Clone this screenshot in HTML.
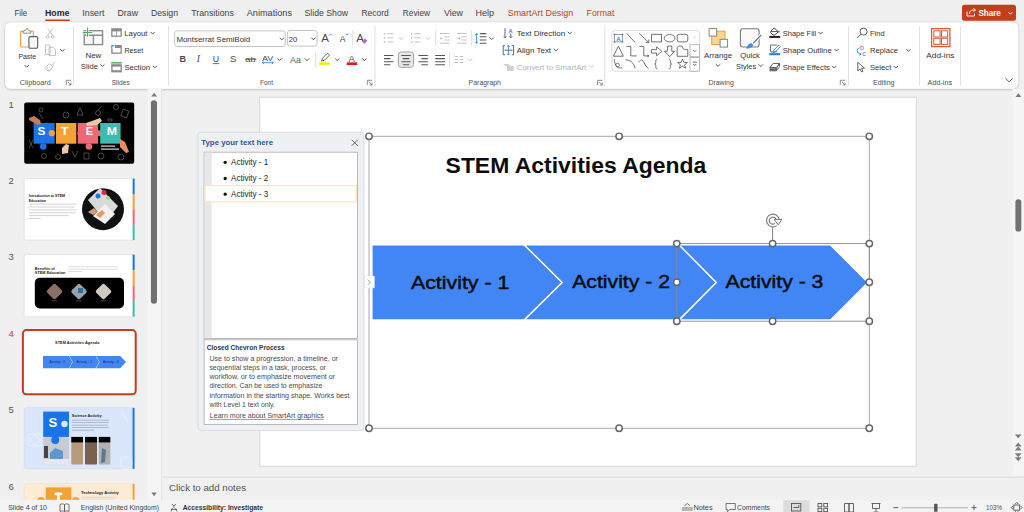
<!DOCTYPE html>
<html><head><meta charset="utf-8">
<style>
html,body{margin:0;padding:0;width:1024px;height:512px;overflow:hidden;background:#f0f0f0;}
svg{display:block;position:absolute;left:0;top:0;}
text{font-family:"Liberation Sans",sans-serif;}
</style></head>
<body>
<svg width="1024" height="512" viewBox="0 0 1024 512">
<defs>
<filter id="sh" x="-5%" y="-20%" width="110%" height="150%"><feDropShadow dx="0" dy="0.6" stdDeviation="0.8" flood-color="#000" flood-opacity="0.28"/></filter>
</defs>
<!-- background -->
<rect x="0" y="0" width="1024" height="512" fill="#f0f0f0"/>
<!-- TABS -->
<g font-size="9" fill="#424242">
<text x="14.5" y="16.4" textLength="12.8" lengthAdjust="spacingAndGlyphs">File</text>
<text x="45" y="16.4" textLength="24.5" lengthAdjust="spacingAndGlyphs" font-weight="700" fill="#262626">Home</text>
<text x="82.3" y="16.4" textLength="22.1" lengthAdjust="spacingAndGlyphs">Insert</text>
<text x="117.5" y="16.4" textLength="20.5" lengthAdjust="spacingAndGlyphs">Draw</text>
<text x="151" y="16.4" textLength="27" lengthAdjust="spacingAndGlyphs">Design</text>
<text x="191.25" y="16.4" textLength="42.6" lengthAdjust="spacingAndGlyphs">Transitions</text>
<text x="246.7" y="16.4" textLength="45.3" lengthAdjust="spacingAndGlyphs">Animations</text>
<text x="304.5" y="16.4" textLength="43.5" lengthAdjust="spacingAndGlyphs">Slide Show</text>
<text x="361.4" y="16.4" textLength="27.35" lengthAdjust="spacingAndGlyphs">Record</text>
<text x="402.8" y="16.4" textLength="27.2" lengthAdjust="spacingAndGlyphs">Review</text>
<text x="444" y="16.4" textLength="19" lengthAdjust="spacingAndGlyphs">View</text>
<text x="475.5" y="16.4" textLength="18.5" lengthAdjust="spacingAndGlyphs">Help</text>
<text x="507.7" y="16.4" textLength="65.6" lengthAdjust="spacingAndGlyphs" fill="#c43e1c">SmartArt Design</text>
<text x="586.6" y="16.4" textLength="27.8" lengthAdjust="spacingAndGlyphs" fill="#c43e1c">Format</text>
</g>
<rect x="45" y="19.5" width="25" height="1.6" rx="0.8" fill="#c43e1c"/>
<!-- Share -->
<rect x="962" y="4.7" width="54" height="16" rx="2.5" fill="#c43e1c"/>
<text x="978.4" y="16.1" font-size="9" font-weight="700" fill="#fff" textLength="22.4" lengthAdjust="spacingAndGlyphs">Share</text>
<g fill="none" stroke="#fff" stroke-width="0.9"><path d="M967 11.5v4.5h7.5v-2.5"/><path d="M969.5 14c0-3 1.5-4 4-4h1.5M973.5 8.5l2 1.5-2 1.5"/></g>
<polyline points="1008.3,12.2 1010.3,14.2 1012.3,12.2" fill="none" stroke="#fff" stroke-width="0.9"/>
<!-- RIBBON -->
<rect x="5" y="22.6" width="1013.2" height="66.2" rx="6" fill="#fff" filter="url(#sh)"/>

<!-- font boxes -->
<rect x="174.6" y="30.9" width="110.6" height="15.6" rx="2.5" fill="#fff" stroke="#bdbdbd" stroke-width="0.9"/>
<rect x="287.4" y="30.5" width="29.6" height="15.6" rx="2.5" fill="#fff" stroke="#bdbdbd" stroke-width="0.9"/>
<!-- separators -->
<g stroke="#e1e1e1" stroke-width="1">
<line x1="73.5" y1="26" x2="73.5" y2="86"/>
<line x1="168.5" y1="26" x2="168.5" y2="86"/>
<line x1="375" y1="26" x2="375" y2="86"/>
<line x1="604.8" y1="26" x2="604.8" y2="86"/>
<line x1="848.5" y1="26" x2="848.5" y2="86"/>
<line x1="919.5" y1="26" x2="919.5" y2="86"/>
<line x1="960.5" y1="26" x2="960.5" y2="86"/>
<line x1="352.7" y1="30" x2="352.7" y2="46"/>
<line x1="315.6" y1="52" x2="315.6" y2="67"/>
<line x1="435.6" y1="30" x2="435.6" y2="46"/>
<line x1="471.4" y1="30" x2="471.4" y2="46"/>
<line x1="449.5" y1="52" x2="449.5" y2="67"/>
</g>
<!-- ribbon texts -->
<g font-size="8" fill="#333">
<text x="18.4" y="59.3" textLength="17.7" lengthAdjust="spacingAndGlyphs">Paste</text>
<text x="85.4" y="58.4" textLength="16" lengthAdjust="spacingAndGlyphs">New</text>
<text x="80.8" y="69.3" textLength="17.2" lengthAdjust="spacingAndGlyphs">Slide</text>
<text x="124.3" y="36" textLength="23.2" lengthAdjust="spacingAndGlyphs">Layout</text>
<text x="124.4" y="52.8" textLength="18.8" lengthAdjust="spacingAndGlyphs">Reset</text>
<text x="124.4" y="69.9" textLength="25.6" lengthAdjust="spacingAndGlyphs">Section</text>
<text x="176.4" y="41.7" textLength="73.8" lengthAdjust="spacingAndGlyphs">Montserrat SemiBold</text>
<text x="288.7" y="41.7" textLength="8.6" lengthAdjust="spacingAndGlyphs">20</text>
<text x="516.7" y="36.3" textLength="48.6" lengthAdjust="spacingAndGlyphs">Text Direction</text>
<text x="516.7" y="53" textLength="34.4" lengthAdjust="spacingAndGlyphs">Align Text</text>
<text x="516.7" y="70.2" textLength="69.6" lengthAdjust="spacingAndGlyphs" fill="#b4b4b4">Convert to SmartArt</text>
<text x="704.1" y="58.2" textLength="27.9" lengthAdjust="spacingAndGlyphs">Arrange</text>
<text x="740.2" y="57.8" textLength="19.8" lengthAdjust="spacingAndGlyphs">Quick</text>
<text x="736.1" y="68.5" textLength="20" lengthAdjust="spacingAndGlyphs">Styles</text>
<text x="782.7" y="36.2" textLength="33.5" lengthAdjust="spacingAndGlyphs">Shape Fill</text>
<text x="782.7" y="53" textLength="49" lengthAdjust="spacingAndGlyphs">Shape Outline</text>
<text x="782.7" y="70.2" textLength="47.1" lengthAdjust="spacingAndGlyphs">Shape Effects</text>
<text x="870" y="36.2" textLength="14.6" lengthAdjust="spacingAndGlyphs">Find</text>
<text x="870" y="53" textLength="28" lengthAdjust="spacingAndGlyphs">Replace</text>
<text x="870" y="70.2" textLength="21.3" lengthAdjust="spacingAndGlyphs">Select</text>
<text x="926.3" y="58.1" textLength="28.1" lengthAdjust="spacingAndGlyphs">Add-ins</text>
</g>
<g font-size="7" fill="#505050">
<text x="19.8" y="85" textLength="30.9" lengthAdjust="spacingAndGlyphs">Clipboard</text>
<text x="111.7" y="85" textLength="18.1" lengthAdjust="spacingAndGlyphs">Slides</text>
<text x="260" y="85" textLength="13" lengthAdjust="spacingAndGlyphs">Font</text>
<text x="468.6" y="84.6" textLength="32.4" lengthAdjust="spacingAndGlyphs">Paragraph</text>
<text x="708.4" y="84.6" textLength="25.4" lengthAdjust="spacingAndGlyphs">Drawing</text>
<text x="873" y="84.6" textLength="21.5" lengthAdjust="spacingAndGlyphs">Editing</text>
<text x="927.6" y="84.8" textLength="24.4" lengthAdjust="spacingAndGlyphs">Add-ins</text>
</g>
<!-- chevrons -->
<g fill="none" stroke="#4a4a4a" stroke-width="0.95">
<polyline points="24.6,65.15 26.7,67.25 28.8,65.15"/>
<polyline points="60.3,49.15 62.4,51.25 64.5,49.15"/>
<polyline points="100.3,64.35 102.4,66.45 104.5,64.35"/>
<polyline points="150.6,31.95 152.7,34.05 154.8,31.95"/>
<polyline points="152.9,65.75 155.0,67.85 157.1,65.75"/>
<polyline points="279.8,37.65 281.9,39.75 284.0,37.65"/>
<polyline points="311.3,37.65 313.4,39.75 315.5,37.65"/>
<polyline points="277.5,58.45 279.6,60.55 281.7,58.45"/>
<polyline points="304.9,58.45 307.0,60.55 309.1,58.45"/>
<polyline points="335.1,58.45 337.2,60.55 339.3,58.45"/>
<polyline points="362.3,58.45 364.4,60.55 366.5,58.45"/>
<polyline points="489.7,37.45 491.8,39.55 493.9,37.45"/>
<polyline points="567.7,31.75 569.8,33.85 571.9,31.75"/>
<polyline points="553.9,48.75 556.0,50.85 558.1,48.75"/>
<polyline points="715.9,64.25 718.0,66.35 720.1,64.25"/>
<polyline points="758.8,64.45 760.9,66.55 763.0,64.45"/>
<polyline points="818.6,31.95 820.7,34.05 822.8,31.95"/>
<polyline points="834.4,48.95 836.5,51.05 838.6,48.95"/>
<polyline points="832.2,65.95 834.3,68.05 836.4,65.95"/>
<polyline points="906.2,49.35 908.3,51.45 910.4,49.35"/>
<polyline points="893.7,65.95 895.8,68.05 897.9,65.95"/>
<polyline points="1005.6,78.4 1009.1,81.9 1012.6,78.4" stroke-width="0.9"/>
</g>
<g fill="none" stroke="#bdbdbd" stroke-width="0.95">
<polyline points="399.0,37.45 401.1,39.55 403.2,37.45"/>
<polyline points="426.1,37.45 428.2,39.55 430.3,37.45"/>
<polyline points="468.0,58.65 470.1,60.75 472.2,58.65"/>
<polyline points="589.4,65.45 591.5,67.55 593.6,65.45"/>
</g>
<!-- dialog launchers -->
<g fill="none" stroke="#606060" stroke-width="0.7">
<path d="M66.3 85V80.3H71M67.8 81.8l3.2 3.2M71 82.6V85h-2.4"/>
<path d="M367.3 85V80.3H372M368.8 81.8l3.2 3.2M372 82.6V85h-2.4"/>
<path d="M597.6 85V80.3H602.3M599.1 81.8l3.2 3.2M602.3 82.6V85h-2.4"/>
<path d="M840.3 85V80.3H845M841.8 81.8l3.2 3.2M845 82.6V85h-2.4"/>
</g>

<!-- Paste -->
<rect x="20.6" y="31.4" width="12.8" height="15.6" rx="0.8" fill="#fff" stroke="#eea43c" stroke-width="1.2"/>
<path d="M23.2 33.2V31.2l2.6-1.2 1.2-1.8 1.2 1.8 2.6 1.2v2z" fill="#f3f3f3" stroke="#7a7a7a" stroke-width="0.8"/>
<rect x="28.9" y="36.6" width="8.8" height="11.6" rx="1.3" fill="#f6f6f6" stroke="#5a5a5a" stroke-width="1.1"/>
<!-- scissors -->
<g fill="none" stroke="#b5b5b5" stroke-width="0.8">
<path d="M47.6 28.5l5 7M52.8 28.5l-5 7"/><circle cx="47.6" cy="37" r="1.4"/><circle cx="52.8" cy="37" r="1.4"/>
<!-- copy -->
<path d="M45.5 45h4.5v9.5h-4.5z"/><path d="M49 47.3h4.3l2.2 2.2v6h-6.5z"/>
<!-- format painter -->
<path d="M45.3 67.3l4.3-3.6 3.2 3.2-3.6 4.3c-1.6-.3-3.5-2.2-3.9-3.9z M49.8 68.6l-2.2 2.2M48.3 67.2l-2.1 2M50.8 65.7l1.6-1.6 1.4 1.4-1.6 1.6M53.2 63.8l2-2"/>
</g>
<!-- New slide -->
<g fill="none" stroke="#8c8c8c" stroke-width="1.4">
<rect x="84.2" y="30.7" width="18.4" height="13.9" fill="#fafafa"/>
<path d="M84.2 35.3h18.4M93.4 35.3v9.3"/>
</g>
<path d="M82.6 32.3h9.6M87.5 27.4v9.3" stroke="#fff" stroke-width="2.6"/>
<path d="M82.6 32.3h9.6M87.5 27.4v9.3" stroke="#4db05a" stroke-width="1.2"/>
<!-- Layout -->
<rect x="111.2" y="28.2" width="10.6" height="8.6" fill="#8a8a8a"/>
<rect x="112.5" y="31.4" width="3.7" height="4.1" fill="#fff"/><rect x="116.9" y="31.4" width="3.6" height="4.1" fill="#fff"/>
<!-- Reset -->
<rect x="111.2" y="45" width="10.6" height="8.8" fill="#8a8a8a"/>
<rect x="112.6" y="48" width="7.9" height="4.5" fill="#fff"/>
<rect x="110.5" y="44" width="4.5" height="4.5" fill="#fff"/>
<path d="M111.8 48.5v-2.8h2.6" fill="none" stroke="#2e89e4" stroke-width="1"/><path d="M110.8 46.5l1-1.6 1 1.6" fill="#2e89e4"/>
<!-- Section -->
<rect x="111.2" y="62" width="10.6" height="1.6" fill="#5cb65f"/>
<rect x="111.2" y="64.2" width="10.6" height="8.2" fill="#8a8a8a"/>
<rect x="112.6" y="66.6" width="7.9" height="3.6" fill="#fff"/>
<!-- grow / shrink / clear -->
<g fill="#4a4a4a">
<text x="321.3" y="41.9" font-size="11.5">A</text>
<text x="339.8" y="41.9" font-size="8.8">A</text>
<text x="356.3" y="42" font-size="11.5">A</text>
</g>
<polyline points="329,35.4 330.5,33.9 332,35.4" fill="none" stroke="#2e89e4" stroke-width="0.9"/>
<polyline points="345.8,33.5 347.3,35 348.8,33.5" fill="none" stroke="#2e89e4" stroke-width="0.9"/>
<path d="M362 41.5l3-3 2.3 2.3-3 3z" fill="#b662c9"/>
<g fill="#4a4a4a">
<text x="179.6" y="62.2" font-size="9" font-weight="700">B</text>
<text x="196.8" y="62.2" font-size="9.5" font-style="italic" style="font-family:'Liberation Serif',serif">I</text>
<text x="212.8" y="61.8" font-size="8.8">U</text>
<text x="230" y="62.2" font-size="9.5">S</text>
<text x="245.3" y="62" font-size="7.5" textLength="10.5" lengthAdjust="spacingAndGlyphs">ab</text>
<text x="262" y="60.8" font-size="8" textLength="11.3" lengthAdjust="spacingAndGlyphs">AV</text>
<text x="290" y="62.8" font-size="9.2" textLength="11" lengthAdjust="spacingAndGlyphs" fill="#5a5a5a">Aa</text>
<text x="348.6" y="61.8" font-size="9.5" fill="#505050">A</text>
</g>
<path d="M212.8 63.6h6.4" stroke="#4a4a4a" stroke-width="0.8"/>
<path d="M244.8 59.2h11.5" stroke="#4a4a4a" stroke-width="0.8"/>
<path d="M262.3 62.7h11M262.3 62.7l1.5-1.2M262.3 62.7l1.5 1.2M273.3 62.7l-1.5-1.2M273.3 62.7l-1.5 1.2" stroke="#2e89e4" stroke-width="0.9" fill="none"/>
<path d="M321.5 61l1-2.8 5-5 2 2-5 5z" fill="none" stroke="#555" stroke-width="0.9"/>
<rect x="319.2" y="62.3" width="10.8" height="2.5" fill="#f6ea00"/>
<rect x="346.8" y="62.4" width="10.4" height="2.6" fill="#ee1010"/>
<!-- bullets & numbering (disabled) -->
<g fill="#c2c2c2"><circle cx="384.5" cy="33.7" r="0.9"/><circle cx="384.5" cy="37.8" r="0.9"/><circle cx="384.5" cy="42" r="0.9"/>
<rect x="411" y="32.9" width="1.3" height="1.8"/><rect x="411" y="37" width="1.3" height="1.8"/><rect x="411" y="41.2" width="1.3" height="1.8"/></g>
<g stroke="#c2c2c2" stroke-width="1" fill="none">
<path d="M387.6 33.7h5.8M387.6 37.8h5.8M387.6 42h5.8"/>
<path d="M414.4 33.7h6.1M414.4 37.8h6.1M414.4 42h6.1"/>
<path d="M439.8 33.5h9.7M444.3 36.8h5.2M444.3 40h5.2M439.8 43.2h9.7M440 38.4h3M440 38.4l1.3-1.1M440 38.4l1.3 1.1"/>
<path d="M457 33.5h9.7M461.5 36.8h5.2M461.5 40h5.2M457 43.2h9.7M457.3 38.4h3M460.3 38.4l-1.3-1.1M460.3 38.4l-1.3 1.1"/>
<path d="M454.5 56.5h3.5M454.5 59.5h3.5M454.5 62.5h3.5M459.8 56.5h3.5M459.8 59.5h3.5M459.8 62.5h3.5"/>
</g>
<!-- line spacing -->
<g stroke="#555" stroke-width="1.1" fill="none"><path d="M479.8 33.6h6.5M479.8 36.8h6.5M479.8 40h6.5M479.8 43.2h6.5"/></g>
<g stroke="#2e89e4" stroke-width="0.9" fill="none"><path d="M476.6 33.5v9.8M475.2 35l1.4-1.5 1.4 1.5M475.2 41.8l1.4 1.5 1.4-1.5"/></g>
<!-- alignment -->
<rect x="398.4" y="51.9" width="15.1" height="15.5" rx="3" fill="#e8e8e8" stroke="#8f8f8f" stroke-width="0.8"/>
<g stroke="#555" stroke-width="1.05" fill="none">
<path d="M384 55.4h9.4M384 58.6h6.4M384 61.7h9.4M384 64.8h6.4"/>
<path d="M401.3 55.4h9.4M402.8 58.6h6.4M401.3 61.7h9.4M402.8 64.8h6.4"/>
<path d="M418.4 55.4h9.4M421.4 58.6h6.4M418.4 61.7h9.4M421.4 64.8h6.4"/>
<path d="M435.2 55.4h9.8M435.2 58.6h9.8M435.2 61.7h9.8M435.2 64.8h9.8"/>
</g>
<!-- text direction -->
<g stroke="#555" stroke-width="0.9" fill="none"><path d="M505 28.2v9.5M503.7 36.3l1.3 1.5 1.3-1.5M510.8 33.5v4.2M509.5 36.3l1.3 1.5 1.3-1.5"/></g>
<text x="508.6" y="32.6" font-size="5.6" font-weight="700" fill="#2e89e4">A</text>
<!-- align text -->
<g stroke="#555" stroke-width="0.9" fill="none"><path d="M505 45.6h-1.8v9.2h1.8M511.8 45.6h1.8v9.2h-1.8M504.5 50.2h8"/></g>
<g stroke="#2e89e4" stroke-width="0.9" fill="none"><path d="M508.4 45.4v9.6M507.1 46.8l1.3-1.4 1.3 1.4M507.1 53.6l1.3 1.4 1.3-1.4"/></g>
<!-- convert -->
<g fill="#d0d0d0"><path d="M503.2 64h5.5l2 2h-5.5z"/><rect x="507" y="66" width="6.6" height="5" /></g>

<!-- shapes gallery -->
<rect x="611.9" y="30.6" width="87.7" height="40.6" rx="3" fill="#fff" stroke="#d6d6d6" stroke-width="0.9"/>
<rect x="690" y="44.7" width="9.6" height="12" fill="#fff" stroke="#a8a8a8" stroke-width="0.8"/>
<rect x="690" y="57.6" width="9.6" height="13.6" fill="#fff" stroke="#a8a8a8" stroke-width="0.8"/>
<polyline points="693.6,37.9 694.9,36.6 696.2,37.9" fill="none" stroke="#c8c8c8" stroke-width="0.8"/>
<polyline points="693.3,50.2 694.8,51.7 696.3,50.2" fill="none" stroke="#404040" stroke-width="0.8"/>
<path d="M692.8 62.2h4M693.3 64l1.5 1.5 1.5-1.5" fill="none" stroke="#404040" stroke-width="0.8"/>
<g fill="none" stroke="#5a5a5a" stroke-width="0.85">
<rect x="614.4" y="34.4" width="8.1" height="7.4" stroke="#8a8a8a"/>
<path d="M626.6 33.3l8.5 9.1"/>
<path d="M639.2 33.3l9.6 9.3M648.8 42.6v-3M648.8 42.6h-3"/>
<rect x="651.6" y="34.3" width="10" height="7.6"/>
<ellipse cx="669.6" cy="38.2" rx="5.4" ry="3.7"/>
<rect x="677.2" y="34.3" width="10.6" height="7.6" rx="2"/>
<path d="M613.4 56.2l5-10 5 10z"/>
<path d="M626.4 46.4h4.4v9.5h6"/>
<path d="M639.4 46.4h4.4v9.5h4.6"/><path d="M647.6 55l1.3.9-1.3.9" fill="#5a5a5a"/>
<path d="M651.4 49.6h5.2v-2.8l5.3 4.5-5.3 4.5v-2.8h-5.2z"/>
<path d="M667.4 46.1h4.4v5.2h2.8l-5 5.3-5-5.3h2.8z"/>
<path d="M679 46.1h3.2c0 2.2 1.6 3.6 3.8 3.6h1.8v6.6h-10.6v-8.4c0-1 .8-1.8 1.8-1.8z"/>
<path d="M614.2 59c.4 3.5 1.2 7.2 3.2 7.6 1.8.4 2.6-1.6 1.4-2.9-1.2-1.3-3.4-.3-3 1.6.4 2 3.6 3.4 6.6 2.4"/>
<path d="M625.6 59.8c4 0 8.5 3 9.5 8.6"/>
<path d="M638.4 62.3c1.5-2 3-3 4.5-1.5 2 2 2.5 6.5 5.5 7.5"/>
<path d="M657.4 59.2c-1.5 0-1.6.8-1.6 2v1.6c0 .8-.6 1.2-1.3 1.2.7 0 1.3.4 1.3 1.2v1.6c0 1.2.1 2 1.6 2"/>
<path d="M668.8 59.2c1.5 0 1.6.8 1.6 2v1.6c0 .8.6 1.2 1.3 1.2-.7 0-1.3.4-1.3 1.2v1.6c0 1.2-.1 2-1.6 2"/>
<path d="M682.5 59l1.3 3.3 3.6.2-2.8 2.3 1 3.5-3.1-2-3.1 2 1-3.5-2.8-2.3 3.6-.2z"/>
</g>
<g fill="#2e89e4"><circle cx="614.4" cy="34.4" r="0.9"/><circle cx="622.5" cy="34.4" r="0.9"/><circle cx="614.4" cy="41.8" r="0.9"/><circle cx="622.5" cy="41.8" r="0.9"/></g>
<text x="616.2" y="40.6" font-size="6" font-weight="700" fill="#2e89e4">A</text>
<!-- Arrange -->
<rect x="711.7" y="31.2" width="13.3" height="13.3" fill="#fbd58b" stroke="#e9a13e" stroke-width="1"/>
<rect x="709.1" y="28.6" width="7.6" height="7.5" fill="#fff" stroke="#7a7a7a" stroke-width="0.9"/>
<rect x="720.1" y="39.3" width="7.5" height="7.8" fill="#fff" stroke="#7a7a7a" stroke-width="0.9"/>
<!-- Quick styles -->
<rect x="740.4" y="28.7" width="18.7" height="18.3" rx="2.5" fill="#fafafa" stroke="#7a7a7a" stroke-width="1.1"/>
<path d="M761.2 34.8l-8 8.6" stroke="#fff" stroke-width="3"/>
<path d="M761.2 34.8l-8 8.6" stroke="#6a6a6a" stroke-width="1.2"/>
<path d="M745.6 48.4c2.6.6 6.2-.4 7.8-3.2l-1.8-1.9c-2.4.3-3.4 1.4-4 2.6-.5.9-1.2 1.8-2 2.5z" fill="#3a8fe0"/>
<!-- Shape fill -->
<path d="M774.3 27.9l3.9 3.9-3.6 3.2h-1.6l-2.2-2.2v-1.6z" fill="#fff" stroke="#3a3a3a" stroke-width="0.95" stroke-linejoin="round"/>
<path d="M771.1 31.5h7" stroke="#3a3a3a" stroke-width="0.8"/>
<path d="M778.9 30c.9 1.1 1.2 2 .7 2.6-.5.4-1.3.1-1.2-.8z" fill="#2e89e4"/>
<rect x="769.3" y="35.9" width="10.9" height="2" fill="#1e1e1e"/>
<!-- shape outline -->
<g fill="none" stroke="#666" stroke-width="0.9"><path d="M777 45h-6.5v6.8h6.8"/></g>
<path d="M773.5 50.6l5.5-5.5 1.5 1.5-5.5 5.5-2 .5z" fill="none" stroke="#2e89e4" stroke-width="0.9"/>
<rect x="769.3" y="53.1" width="10.9" height="2.1" fill="#2f7ee0"/>
<!-- shape effects -->
<g fill="none" stroke="#555" stroke-width="0.9"><path d="M770 67.5l3-4h6.5l-3 4.3v3h-6.5z M770 67.5h6.5M776.5 67.8l3-4.3v3l-3 4.2"/></g>
<path d="M770 68.2h6.5v2.6h-6.5z" fill="#666"/>
<!-- find -->
<g fill="none" stroke="#555" stroke-width="0.95"><circle cx="863.6" cy="31.6" r="3.5"/><path d="M861.1 34.1l-3.8 3.7"/></g>
<!-- replace -->
<text x="859.9" y="50.2" font-size="7.2" fill="#b163cc">b</text>
<text x="862.3" y="55.6" font-size="7.2" fill="#2e89e4">c</text>
<path d="M859.6 47.8c-2.2.6-2.8 2.6-2 4.3.6 1.2 1.8 2 3.2 2.1M859.8 52.8l1.2 1.4-1.5 1" fill="none" stroke="#2e89e4" stroke-width="0.95"/>
<!-- select -->
<path d="M857.8 62.2v8.8l2.2-2 1.6 3 1.4-.7-1.5-3h3.1z" fill="none" stroke="#555" stroke-width="0.9"/>
<!-- add-ins -->
<rect x="931.6" y="28.6" width="18.3" height="18" fill="none" stroke="#d85a36" stroke-width="1.3"/>
<g fill="none" stroke="#d85a36" stroke-width="1"><rect x="933.8" y="30.8" width="6.3" height="6.2"/><rect x="941.5" y="30.8" width="6.2" height="6.2"/><rect x="933.8" y="38.3" width="6.3" height="6.1"/><rect x="941.5" y="38.3" width="6.2" height="6.1"/></g>

<!-- left panel -->
<rect x="147.6" y="89" width="13.4" height="411" fill="#f5f5f5"/>
<line x1="161.5" y1="89" x2="161.5" y2="500" stroke="#e4e4e4" stroke-width="1"/>
<path d="M151.2 96.6l2.9-3.8 2.9 3.8z" fill="#7a7a7a"/>
<rect x="150.9" y="100.2" width="6.1" height="203.6" rx="3" fill="#717171"/>
<path d="M151.4 492.6l2.7 3.6 2.7-3.6z" fill="#7a7a7a"/>
<g font-size="9.5" fill="#555">
<text x="8.6" y="107.9">1</text>
<text x="8.6" y="184.4">2</text>
<text x="8.6" y="260.4">3</text>
<text x="8.6" y="337.4" fill="#c43e1c">4</text>
<text x="8.6" y="413.4">5</text>
<text x="8.6" y="489.6">6</text>
</g>
<!-- thumb 1 -->
<rect x="24.2" y="102.4" width="110" height="61.4" rx="2" fill="#000"/>
<g fill="none" stroke="#8a8a8a" stroke-width="0.5">
<circle cx="41" cy="110" r="2"/><path d="M39 113l4 6"/><circle cx="66" cy="115" r="3"/><path d="M80 108l-3 7h6z"/><circle cx="98" cy="113" r="2.5"/><path d="M98 110l4-4"/><circle cx="116" cy="107" r="2.5"/><rect x="122" y="110" width="6" height="7" transform="rotate(20 125 113)"/>
<circle cx="44" cy="156" r="2.5"/><circle cx="58" cy="157" r="2.5"/><path d="M72 151l3 6 3-6"/><rect x="84" y="153" width="5" height="6"/><circle cx="101" cy="156" r="3"/><circle cx="121" cy="157" r="3"/><path d="M29 140l4 8M33 140l-4 8"/><rect x="108" y="119" width="4" height="2"/>
</g>
<rect x="33.6" y="123" width="21" height="20.7" fill="#1a73e8"/>
<circle cx="43.2" cy="146.5" r="3.3" fill="#1a73e8"/>
<rect x="55.9" y="123" width="20.4" height="20.7" fill="#f4a236"/>
<circle cx="51.8" cy="133.2" r="3.1" fill="#f4a236"/>
<circle cx="80.5" cy="133.2" r="3" fill="#f4a236"/>
<rect x="77.7" y="123" width="20.4" height="20.7" fill="#ee6977"/>
<circle cx="88.9" cy="146.5" r="3.3" fill="#ee6977"/>
<circle cx="99.5" cy="133.2" r="3" fill="#ee6977"/>
<rect x="100.2" y="123" width="20.4" height="20.7" fill="#3dbdb0"/>
<g font-size="11.5" font-weight="700" fill="#fff">
<text x="37.4" y="135.3" textLength="7.9" lengthAdjust="spacingAndGlyphs">S</text><text x="60.7" y="135.3" textLength="7.9" lengthAdjust="spacingAndGlyphs">T</text><text x="85.8" y="135.3" textLength="7.4" lengthAdjust="spacingAndGlyphs">E</text><text x="106.8" y="135.3" textLength="10.3" lengthAdjust="spacingAndGlyphs">M</text>
</g>
<path d="M29 118l5-2 6 4 1 4-3 1-9-5z" fill="#c77b5b"/>
<path d="M86 123l6-2 8-3 2 3-5 4-10 1z" fill="#f1c6a2"/>
<path d="M120 139l5 3 4 10-3 1-6-6z" fill="#e88e5e"/>
<path d="M62 148l4-4 3 1-1 8-6 1z" fill="#f2c8a8"/>
<rect x="101" y="145.5" width="14" height="1.2" fill="#ddd"/><rect x="101" y="148.5" width="18" height="1.2" fill="#ddd"/>
<!-- thumb 2 -->
<rect x="24.2" y="178.5" width="110.2" height="61.6" rx="2" fill="#fff" stroke="#dadada" stroke-width="0.6"/>
<rect x="132.6" y="178.6" width="2" height="15.4" fill="#1a73e8"/>
<rect x="132.6" y="194" width="2" height="15.4" fill="#f4a236"/>
<rect x="132.6" y="209.4" width="2" height="15.4" fill="#ee6977"/>
<rect x="132.6" y="224.8" width="2" height="15.3" fill="#3dbdb0"/>
<g font-size="3.6" font-weight="700" fill="#222"><text x="28.7" y="197.2">Introduction to STEM</text><text x="28.7" y="201.6">Education</text></g>
<g fill="#c8c8c8"><rect x="28.7" y="203.7" width="48" height="0.8"/><rect x="28.7" y="206.6" width="46" height="0.8"/><rect x="28.7" y="209.5" width="48" height="0.8"/><rect x="28.7" y="212.4" width="47" height="0.8"/><rect x="28.7" y="215.3" width="40" height="0.8"/><rect x="28.7" y="218.2" width="12" height="0.8"/></g>
<circle cx="103" cy="209.2" r="21" fill="#111"/>
<path d="M88 200l12-12 18 18-12 16z" fill="#d9d9d9"/>
<path d="M93 216l12-12 10 10-10 10z" fill="#f2f2f2"/>
<path d="M96 215l6-5 3 3-5 5z" fill="#f4945a"/>
<circle cx="104" cy="192.5" r="2.5" fill="#e0284d"/><circle cx="98" cy="196" r="2.5" fill="#1a73e8"/><circle cx="108" cy="198" r="2" fill="#9ee07a"/>
<path d="M88 212l6-4 4 4-5 3z" fill="#c9a083"/>
<!-- thumb 3 -->
<rect x="24.2" y="254.5" width="110.2" height="62.3" rx="2" fill="#fff" stroke="#dadada" stroke-width="0.6"/>
<rect x="132.6" y="254.6" width="2" height="15.5" fill="#1a73e8"/>
<rect x="132.6" y="270.1" width="2" height="15.5" fill="#f4a236"/>
<rect x="132.6" y="285.6" width="2" height="15.5" fill="#ee6977"/>
<rect x="132.6" y="301.1" width="2" height="15.6" fill="#3dbdb0"/>
<g font-size="3.9" font-weight="700" fill="#222"><text x="34.8" y="269.9">Benefits of</text><text x="34.8" y="274.2">STEM Education</text></g>
<g fill="#cfcfcf"><rect x="68" y="266.5" width="50" height="0.7"/><rect x="68" y="268.8" width="50" height="0.7"/><rect x="68" y="271.1" width="14" height="0.7"/></g>
<rect x="34.8" y="277.7" width="89.2" height="30.7" rx="5" fill="#000"/>
<g transform="rotate(45 54.5 291.5)"><rect x="48.5" y="285.5" width="12" height="12" rx="2" fill="#8a7068"/></g>
<g transform="rotate(45 79 291.5)"><rect x="73" y="285.5" width="12" height="12" rx="2" fill="#9aa1a8"/></g>
<g transform="rotate(45 103.5 291.5)"><rect x="97.5" y="285.5" width="12" height="12" rx="2" fill="#cfc9c1"/></g>
<rect x="78" y="288" width="5" height="5" fill="#2d6e9a"/>
<rect x="52" y="300.5" width="5" height="0.7" fill="#666"/><rect x="76.5" y="300.5" width="5" height="0.7" fill="#666"/><rect x="101" y="300.5" width="5" height="0.7" fill="#666"/>
<!-- thumb 4 (selected) -->
<rect x="22.9" y="330.1" width="112.8" height="64.1" rx="3.5" fill="#fff" stroke="#c43e1c" stroke-width="2"/>
<text x="55.1" y="344" font-size="3.9" font-weight="700" fill="#222" textLength="44.2" lengthAdjust="spacingAndGlyphs">STEM Activities Agenda</text>
<path d="M43 356h26.2l3 6.1-3 6.1H43z" fill="#4285f4"/>
<path d="M69.6 356h25.9l3.7 6.1-3.7 6.1H69.6l3-6.1z" fill="#4285f4"/>
<path d="M96 356h24.2l5.8 6.1-5.8 6.1H96l3.6-6.1z" fill="#4285f4"/>
<g font-size="3.4" fill="#1a2a4a"><text x="49.5" y="363.4">Activity - 1</text><text x="76.5" y="363.4">Activity - 2</text><text x="103" y="363.4">Activity - 3</text></g>
<!-- thumb 5 -->
<rect x="24.2" y="407.6" width="110.2" height="61.2" rx="2" fill="#d9e6fb" stroke="#d0d8e6" stroke-width="0.5"/>
<rect x="132.6" y="407.8" width="1.9" height="61" fill="#1a73e8"/>
<g fill="none" stroke="#eef3fc" stroke-width="0.7"><ellipse cx="35" cy="440" rx="8" ry="4" transform="rotate(40 35 440)"/><ellipse cx="35" cy="440" rx="8" ry="4" transform="rotate(-40 35 440)"/><circle cx="126" cy="463" r="6"/><path d="M122 412l6 10"/></g>
<rect x="43.2" y="411.6" width="25.8" height="25.3" fill="#1a73e8"/>
<circle cx="64.5" cy="424" r="3.2" fill="#d9e6fb"/>
<circle cx="55.2" cy="440" r="4" fill="#1a73e8"/>
<text x="48.6" y="426.6" font-size="13" font-weight="700" fill="#fff" textLength="8.8" lengthAdjust="spacingAndGlyphs">S</text>
<rect x="43.2" y="437" width="25.8" height="27.7" rx="2" fill="#c5ccd4"/>
<path d="M50 453l5-5 8 3v8h-13z" fill="#5e97cf"/><rect x="43.2" y="459" width="25.8" height="5.7" fill="#e8e8e8"/><rect x="44" y="446" width="4" height="12" fill="#444"/>
<circle cx="55.2" cy="440" r="4" fill="#1a73e8"/>
<rect x="71.3" y="436.9" width="11.7" height="27.7" rx="1" fill="#b59a7c"/>
<rect x="85" y="436.9" width="12" height="27.7" rx="1" fill="#7a6050"/>
<rect x="98.8" y="436.9" width="11.5" height="27.7" rx="1" fill="#b0b0ae"/><path d="M102 448l4 2-1 12-4 1z" fill="#5a7a90"/>
<rect x="71.3" y="436.9" width="11.7" height="5.5" fill="#000"/><rect x="85" y="436.9" width="12" height="5.5" fill="#000"/><rect x="98.8" y="436.9" width="11.5" height="5.5" fill="#000"/>
<text x="71.8" y="417.4" font-size="4.2" font-weight="700" fill="#222" textLength="29.8" lengthAdjust="spacingAndGlyphs">Science Activity</text>
<g fill="#9aa4b8"><rect x="71.8" y="419.8" width="37" height="0.7"/><rect x="71.8" y="422.3" width="37" height="0.7"/><rect x="71.8" y="424.8" width="36" height="0.7"/><rect x="71.8" y="427.3" width="37" height="0.7"/><rect x="71.8" y="429.8" width="22" height="0.7"/></g>
<!-- thumb 6 -->
<rect x="24.2" y="483.6" width="110.2" height="30" rx="2" fill="#fdebd4" stroke="#f0dcc0" stroke-width="0.5"/>
<rect x="132.6" y="483.8" width="1.9" height="30" fill="#f4a236"/>
<rect x="45.7" y="487.4" width="25.7" height="25" fill="#f4a236"/>
<circle cx="41" cy="501" r="3.9" fill="#f4a236"/><circle cx="75.8" cy="501" r="3.9" fill="#f4a236"/>
<rect x="54.6" y="492.6" width="7.6" height="2.6" fill="#fff"/><rect x="57.1" y="492.6" width="2.7" height="8" fill="#fff"/>
<text x="81" y="494.2" font-size="4.2" font-weight="700" fill="#222" textLength="37.8" lengthAdjust="spacingAndGlyphs">Technology Activity</text>
<g fill="#d8cbb8"><rect x="81" y="496.8" width="36" height="0.6"/><rect x="81" y="498.8" width="34" height="0.6"/></g>

<!-- right scrollbar column -->
<rect x="1012.5" y="89" width="11.5" height="386.7" fill="#f5f5f5"/>
<path d="M1015.5 97l2.9-3.8 2.9 3.8z" fill="#7a7a7a"/>
<rect x="1015.4" y="199.2" width="5.9" height="32.4" rx="2.9" fill="#717171"/>
<path d="M1014.8 434.4l3.4 3.8 3.4-3.8z" fill="#7a7a7a"/>
<path d="M1014.8 446.4l3.4-4 3.4 4zM1014.8 450.5l3.4-4 3.4 4z" fill="#7a7a7a"/>
<path d="M1014.8 453.2l3.4 4 3.4-4zM1014.8 457.3l3.4 4 3.4-4z" fill="#7a7a7a"/>
<!-- slide -->
<rect x="259.8" y="97.2" width="656.4" height="369" fill="#fff" stroke="#d0d0d0" stroke-width="0.8"/>
<text x="445.6" y="172.6" font-size="22" font-weight="700" fill="#0d0d0d" textLength="260.6" lengthAdjust="spacingAndGlyphs">STEM Activities Agenda</text>
<g fill="#4285f4" stroke="#fff" stroke-width="1.4" stroke-linejoin="miter">
<path d="M371.9 244.9H524.3L562.2 282.4L524.3 319.9H371.9Z"/>
<path d="M524.3 244.9H679.2L716.4 282.4L679.2 319.9H524.3L562.2 282.4Z"/>
<path d="M679.2 244.9H830.5L868 282.4L830.5 319.9H679.2L716.4 282.4Z"/>
</g>
<g font-size="18" font-weight="400" fill="#0d0d0d" stroke="#0d0d0d" stroke-width="0.45">
<text x="410.9" y="288.8" textLength="98.5" lengthAdjust="spacingAndGlyphs">Activity - 1</text>
<text x="572.2" y="288" textLength="97.8" lengthAdjust="spacingAndGlyphs">Activity - 2</text>
<text x="725.6" y="287.6" textLength="97.8" lengthAdjust="spacingAndGlyphs">Activity - 3</text>
</g>
<!-- selection frames -->
<rect x="369" y="136.3" width="500.3" height="292" fill="none" stroke="#a0a0a0" stroke-width="0.9"/>
<rect x="676.8" y="243.6" width="192.5" height="77.6" fill="none" stroke="#8a8a8a" stroke-width="0.9"/>
<line x1="772.6" y1="227.3" x2="772.6" y2="243.6" stroke="#777" stroke-width="0.9"/>
<g fill="#fff" stroke="#666" stroke-width="1.45">
<circle cx="369" cy="136.3" r="3.2"/><circle cx="619.1" cy="136.3" r="3.2"/><circle cx="869.3" cy="136.3" r="3.2"/>
<circle cx="869.3" cy="282.3" r="3.2"/>
<circle cx="369" cy="428.3" r="3.2"/><circle cx="619.1" cy="428.3" r="3.2"/><circle cx="869.3" cy="428.3" r="3.2"/>
<circle cx="676.8" cy="243.6" r="3.2"/><circle cx="772.6" cy="243.6" r="3.2"/><circle cx="869.3" cy="243.6" r="3.2"/>
<circle cx="676.8" cy="282.3" r="3.2"/>
<circle cx="676.8" cy="321.2" r="3.2"/><circle cx="772.6" cy="321.2" r="3.2"/><circle cx="869.3" cy="321.2" r="3.2"/>
</g>
<!-- rotate handle -->
<g fill="none" stroke="#7a7a7a" stroke-width="1.15">
<path d="M779.2 219.2A6.4 6.4 0 1 0 776.8 225.6"/>
<path d="M776.2 219.9A3.5 3.5 0 1 0 775 223.4"/>
</g>
<path d="M781.9 219.3l-7.6.2 3.9 5.4z" fill="#fff" stroke="#7a7a7a" stroke-width="1"/>
<!-- expand button -->
<rect x="364.4" y="276" width="10" height="11.9" fill="#fff" stroke="#e4e4e4" stroke-width="0.5"/>
<polyline points="367.8,279.6 370.4,282.2 367.8,284.8" fill="none" stroke="#8a8a8a" stroke-width="0.9"/>
<!-- text pane -->
<rect x="197.9" y="132.3" width="166" height="298.2" rx="3" fill="#eef0f3" stroke="#d2d8de" stroke-width="0.8"/>
<text x="201.3" y="145.1" font-size="8" font-weight="700" fill="#2b5797" textLength="71.7" lengthAdjust="spacingAndGlyphs">Type your text here</text>
<path d="M351.6 139.7l6.2 6.2M357.8 139.7l-6.2 6.2" stroke="#555" stroke-width="0.9"/>
<rect x="204.1" y="152.2" width="153.3" height="186.4" fill="#fff" stroke="#ababab" stroke-width="0.8"/>
<rect x="204.5" y="152.6" width="7.2" height="185.6" fill="#e8e8e8"/>
<rect x="204.9" y="185.6" width="151.5" height="16.2" fill="#fff" stroke="#fde0ae" stroke-width="1"/>
<g fill="#111"><circle cx="225.2" cy="162.3" r="1.65"/><circle cx="225.2" cy="178.5" r="1.65"/><circle cx="225.2" cy="194.2" r="1.65"/></g>
<g font-size="8.6" fill="#262626">
<text x="231" y="165.2" textLength="37.3" lengthAdjust="spacingAndGlyphs">Activity - 1</text>
<text x="231" y="181.4" textLength="37.3" lengthAdjust="spacingAndGlyphs">Activity - 2</text>
<text x="231" y="197.1" textLength="37.3" lengthAdjust="spacingAndGlyphs">Activity - 3</text>
</g>
<rect x="204.1" y="339.8" width="153.3" height="84.8" fill="#fff" stroke="#ababab" stroke-width="0.8"/>
<text x="206.8" y="349.8" font-size="7" font-weight="700" fill="#333" textLength="77.8" lengthAdjust="spacingAndGlyphs">Closed Chevron Process</text>
<g font-size="7" fill="#4a4a4a">
<text x="209.4" y="360.9" textLength="128.6" lengthAdjust="spacingAndGlyphs">Use to show a progression, a timeline, or</text>
<text x="209.4" y="370.1" textLength="116.5" lengthAdjust="spacingAndGlyphs">sequential steps in a task, process, or</text>
<text x="209.4" y="379.2" textLength="125.8" lengthAdjust="spacingAndGlyphs">workflow, or to emphasize movement or</text>
<text x="209.4" y="388.4" textLength="112.9" lengthAdjust="spacingAndGlyphs">direction. Can be used to emphasize</text>
<text x="209.4" y="397.5" textLength="140.2" lengthAdjust="spacingAndGlyphs">information in the starting shape. Works best</text>
<text x="209.4" y="406.7" textLength="65.6" lengthAdjust="spacingAndGlyphs">with Level 1 text only.</text>
<text x="209.8" y="418.1" textLength="114" lengthAdjust="spacingAndGlyphs">Learn more about SmartArt graphics</text>
</g>
<line x1="209.8" y1="419.4" x2="323.8" y2="419.4" stroke="#555" stroke-width="0.6"/>

<!-- notes -->
<line x1="162" y1="477.2" x2="1024" y2="477.2" stroke="#e0e0e0" stroke-width="1.2"/>
<text x="169" y="491" font-size="9.7" fill="#555" textLength="77" lengthAdjust="spacingAndGlyphs">Click to add notes</text>
<!-- status bar -->
<rect x="0" y="499.8" width="1024" height="12.2" fill="#f3f3f3"/>
<g font-size="7" fill="#444">
<text x="8.2" y="510" textLength="38.8" lengthAdjust="spacingAndGlyphs">Slide 4 of 10</text>
<text x="80.7" y="510" textLength="78.3" lengthAdjust="spacingAndGlyphs">English (United Kingdom)</text>
<text x="182.7" y="510" font-weight="700" fill="#333" textLength="80.3" lengthAdjust="spacingAndGlyphs">Accessibility: Investigate</text>
<text x="693.4" y="510.2" textLength="19.2" lengthAdjust="spacingAndGlyphs">Notes</text>
<text x="737" y="510.2" textLength="33" lengthAdjust="spacingAndGlyphs">Comments</text>
<text x="986" y="510.2" textLength="16" lengthAdjust="spacingAndGlyphs" fill="#555">103%</text>
</g>
<g fill="none" stroke="#555" stroke-width="0.8">
<path d="M60 504.5c1.5-.8 3-.8 4.5 0v7c-1.5-.8-3-.8-4.5 0zM64.5 504.5c1.5-.8 3-.8 4.5 0v7c-1.5-.8-3-.8-4.5 0z"/>
<path d="M172 504l2 2 2-2M174 506v2M171 509.5h6M172.5 508l-1.5 3.5M175.5 508l1.5 3.5"/>
<path d="M681.8 508h11M681.8 510h11M684.5 505.8l2.8-2.3 2.8 2.3"/>
<path d="M726 503.5h9.3v6h-5.5l-2.5 2.3v-2.3H726z"/>
</g>
<rect x="783.3" y="500.2" width="26.3" height="11.8" fill="#dcdcdc"/>
<g fill="none" stroke="#555" stroke-width="0.9">
<rect x="791.5" y="503.5" width="9.3" height="7.5"/><path d="M793.5 507.5h5.3M798.8 505v2.5"/>
<rect x="818" y="503.5" width="3.8" height="3.3"/><rect x="823.8" y="503.5" width="3.8" height="3.3"/><rect x="818" y="508.3" width="3.8" height="3.3"/><rect x="823.8" y="508.3" width="3.8" height="3.3"/>
<path d="M844.5 503.5h4.5v8.5h-4.5zM849 503.5h4.5v8.5H849z"/>
<path d="M871.5 503.5h9M872.5 503.5v5h7v-5M876 508.5v3M873.5 512h5"/>
<path d="M893.3 507.6h5M971.5 507.6h5M974 505.1v5"/>
<rect x="1013.8" y="505" width="5.8" height="5.2"/><path d="M1015.2 504l1.5-1.5 1.5 1.5M1015.2 511.2l1.5 1.5 1.5-1.5M1012.8 506.1l-1.5 1.5 1.5 1.5M1020.6 506.1l1.5 1.5-1.5 1.5"/>
</g>
<line x1="901.8" y1="507.8" x2="968.1" y2="507.8" stroke="#a8a8a8" stroke-width="0.9"/>
<rect x="934.1" y="503.8" width="3.4" height="8" rx="0.5" fill="#555"/>

</svg>
</body></html>
